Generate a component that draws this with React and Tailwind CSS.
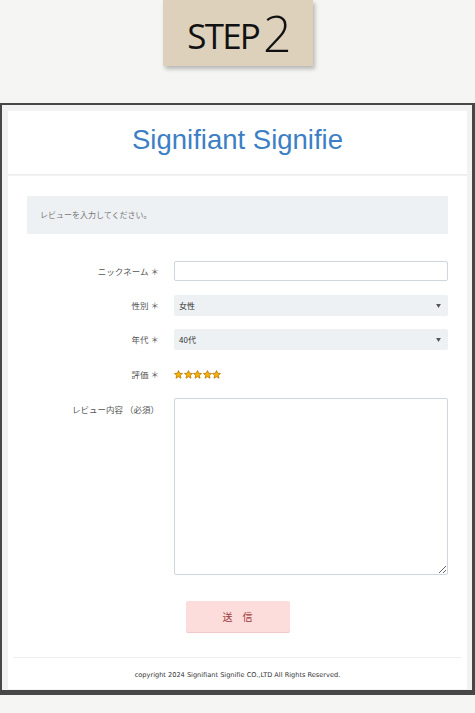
import React from 'react';

const jp = { fontFamily: '"Noto Sans CJK JP", "Noto Sans", sans-serif' };

function Star() {
  return (
    <svg width="9" height="9" viewBox="0 0 24 24">
      <polygon
        points="12,1.5 15,8.6 22.8,9.2 16.8,14.3 18.7,22 12,17.8 5.3,22 7.2,14.3 1.2,9.2 9,8.6"
        fill="#f7b500"
        stroke="#b86f00"
        strokeWidth="2"
        strokeLinejoin="round"
      />
    </svg>
  );
}

function Caret() {
  return (
    <svg width="5" height="4" viewBox="0 0 6 5" className="mr-[7px]">
      <polygon points="0,0 6,0 3,5" fill="#555" />
    </svg>
  );
}

function Row({ label, children, className = '' }) {
  return (
    <div className={`flex items-center pl-[19px] ${className}`}>
      <div className="w-[134px] shrink-0 pr-[2px] text-right text-[8.5px] text-[#555]">{label}</div>
      <div className="ml-[13px] w-[274px]">{children}</div>
    </div>
  );
}

export default function App() {
  return (
    <div className="w-[475px] h-[713px] bg-[#f5f5f3] flex flex-col items-center" style={jp}>
      <div className="w-[150px] h-[66px] bg-[#ddd1bc] shadow-[2px_3px_4px_rgba(0,0,0,0.25)] flex items-end justify-center pb-[13px] pl-[4px] text-[#111]">
        <span className="text-[35px] leading-[35px] tracking-[-1.8px]" style={{ fontFamily: '"Open Sans", sans-serif' }}>STEP</span>
        <span className="text-[50px] leading-[40px] font-light ml-[4px]" style={{ fontFamily: '"Open Sans", sans-serif' }}>2</span>
      </div>

      <div className="mt-[37px] w-full h-[592px] border-[#474747] border-l-2 border-t-2 border-r-[3px] border-b-[5px] bg-[#f2f2f2] pl-[6px] pr-[5px] pt-[6px] pb-[1px] flex flex-col">
        <header className="h-[64px] bg-white border-b border-[#ececec] flex items-center justify-center pb-[6px]">
          <h1 className="text-[27.5px] text-[#3d7fc4]" style={{ fontFamily: '"Liberation Sans", sans-serif' }}>Signifiant Signifie</h1>
        </header>

        <main className="flex-1 bg-white mt-[1px] flex flex-col">
          <div className="mx-[19px] mt-[20px] h-[38px] bg-[#eef1f4] flex items-center pl-[13px] text-[8px] text-[#777]">
            レビューを入力してください。
          </div>

          <Row label="ニックネーム ＊" className="mt-[27px]">
            <div className="h-[20px] border border-[#cfd6dd] rounded-[2px] bg-white" />
          </Row>

          <Row label="性別 ＊" className="mt-[14px]">
            <div className="h-[21px] bg-[#eef1f4] rounded-[2px] flex items-center justify-between pl-[5px] text-[8px] text-[#333]">
              <span>女性</span>
              <Caret />
            </div>
          </Row>

          <Row label="年代 ＊" className="mt-[13px]">
            <div className="h-[21px] bg-[#eef1f4] rounded-[2px] flex items-center justify-between pl-[5px] text-[8px] text-[#333]">
              <span>40代</span>
              <Caret />
            </div>
          </Row>

          <Row label="評価 ＊" className="mt-[18px]">
            <div className="flex gap-[0.5px] h-[12px] items-center">
              <Star />
              <Star />
              <Star />
              <Star />
              <Star />
            </div>
          </Row>

          <div className="flex mt-[17px] pl-[19px]">
            <div className="w-[134px] shrink-0 pr-[2px] text-right text-[8.5px] text-[#555] pt-[5px]">レビュー内容 （必須）</div>
            <textarea
              readOnly
              className="ml-[13px] w-[274px] h-[177px] border border-[#cfd6dd] rounded-[2px] bg-white outline-none"
            />
          </div>

          <div className="flex justify-center mt-[26px]">
            <button className="w-[104px] h-[31px] bg-[#fddcdc] rounded-[2px] shadow-[0_1px_0_#efc8c8] text-[10px] text-[#9b3a3a]">
              送　信
            </button>
          </div>

          <div className="mx-[5px] mt-[25px] border-t border-[#efefef]" />
          <div className="flex-1 flex items-center justify-center pt-[6px] text-[6.6px] text-[#333]" style={{ fontFamily: '"DejaVu Sans", sans-serif' }}>
            copyright 2024 Signifiant Signifie CO.,LTD All Rights Reserved.
          </div>
        </main>
      </div>
    </div>
  );
}
